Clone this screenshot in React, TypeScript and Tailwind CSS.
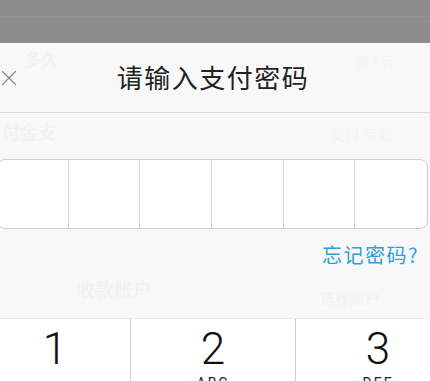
import { X } from 'lucide-react'

const cells = [70, 72, 72, 72, 72, 73]

const keys = [
  { n: '1', sub: '', w: 'w-[150px] -ml-[20px]' },
  { n: '2', sub: 'ABC', w: 'w-[165px]' },
  { n: '3', sub: 'DEF', w: 'w-[165px]' },
]

export default function App() {
  return (
    <div className="w-[430px] h-[381px] overflow-hidden flex flex-col bg-white" style={{ fontFamily: '"Noto Sans CJK SC", "Noto Sans", sans-serif' }}>
      {/* dimmed page behind */}
      <div className="h-[43px] shrink-0 bg-[#8d8d8d] pt-[16px]">
        <div className="h-px bg-[#959595]" />
        <div className="h-px mt-[4px] bg-[#939393]" />
      </div>

      {/* sheet */}
      <div className="relative h-[275px] shrink-0 bg-[#f8f8f8]">
        {/* faint text bleeding through */}
        <span className="absolute left-[24px] top-[3px] text-[17px] text-[#f1f1f1]">多久</span>
        <span className="absolute left-[356px] top-[8px] text-[13px] text-[#f3f3f3]">金 1 元</span>
        <span className="absolute left-[2px] top-[75px] text-[18px] text-[#f1f1f1]">付金支</span>
        <span className="absolute left-[330px] top-[80px] text-[15px] text-[#f4f4f4]">支付 宝账</span>
        <span className="absolute left-[76px] top-[232px] text-[19px] text-[#f0f0f0]">收款账户</span>
        <span className="absolute left-[320px] top-[244px] text-[15px] text-[#f2f2f2]">选择账户</span>

        <div className="relative h-[70px] flex items-center justify-center border-b border-[#d8d8d8]">
          <X className="absolute left-[-4px] top-[22px] w-[26px] h-[26px] text-[#8a8a8a]" strokeWidth={1.1} />
          <span className="text-[26px] leading-none text-[#222] tracking-[1.5px] ml-[-4px] mt-[-2px]">请输入支付密码</span>
        </div>

        <div className="relative ml-[-3px] mt-[46px] w-[431px] h-[70px] flex bg-white border border-[#cfcfcf] rounded-[8px] overflow-hidden">
          {cells.map((w, i) => (
            <div key={i} className={i > 0 ? 'h-full border-l border-[#d6d6d6]' : 'h-full'} style={{ width: w }} />
          ))}
        </div>

        <div className="relative flex justify-end pr-[11px] mt-[14px]">
          <span className="text-[20px] leading-[24px] text-[#2f9fd6] tracking-[1.5px]">忘记密码?</span>
        </div>
      </div>

      {/* number keyboard */}
      <div className="flex-1 flex bg-white border-t border-[#ececec]">
        {keys.map((k, i) => (
          <div key={k.n} className={`${k.w} shrink-0 flex flex-col items-center pt-[6px] ${i > 0 ? 'border-l border-[#cfcfcf]' : ''}`}>
            <span className="text-[44px] leading-[48px] font-light text-[#111]" style={{ fontFamily: 'Roboto, "Liberation Sans", sans-serif' }}>{k.n}</span>
            <span className="text-[14px] leading-[16px] tracking-[2px] text-[#222] mt-[2px]" style={{ fontFamily: 'Roboto, "Liberation Sans", sans-serif' }}>{k.sub}</span>
          </div>
        ))}
      </div>
    </div>
  )
}
